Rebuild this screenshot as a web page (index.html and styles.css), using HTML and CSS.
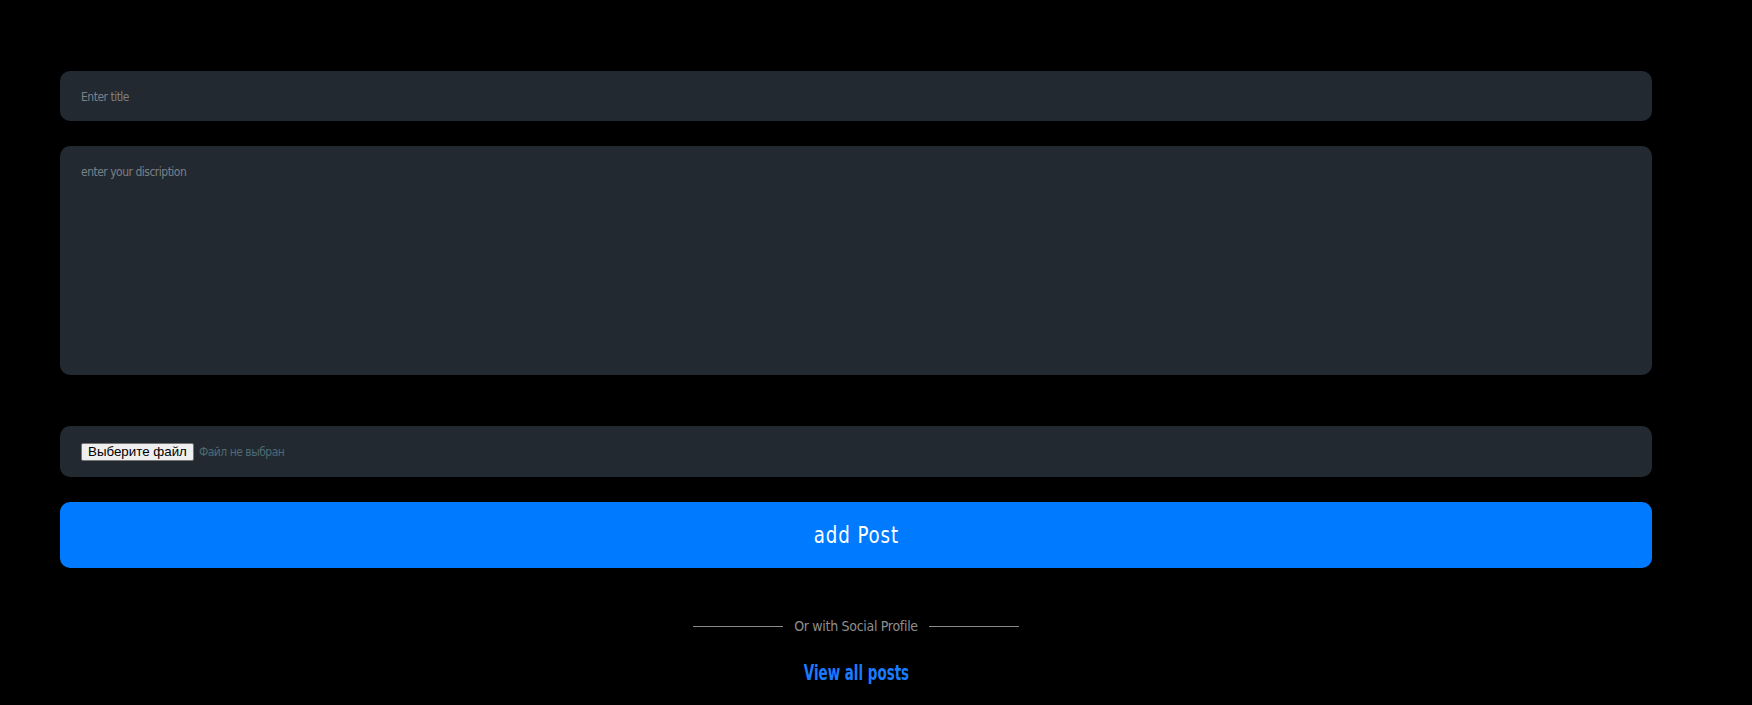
FILE: index.html
```html
<!DOCTYPE html>
<html lang="en">
<head>
<meta charset="utf-8">
<title>Add Post</title>
<link rel="stylesheet" href="styles.css">
</head>
<body>
<main class="page">
  <form class="post-form">
    <input class="field field-title" type="text" placeholder="Enter title">
    <textarea class="field field-desc" placeholder="enter your discription"></textarea>
    <div class="field field-file">
      <span class="file-btn">Выберите файл</span>
      <span class="file-name">Файл не выбран</span>
    </div>
    <button class="submit" type="button"><span class="submit-label">add Post</span></button>
  </form>
  <div class="divider">
    <span class="divider-line"></span>
    <span class="divider-text">Or with Social Profile</span>
    <span class="divider-line"></span>
  </div>
  <a class="view-all" href="#">View all posts</a>
</main>
</body>
</html>
```

FILE: styles.css
```css
* { box-sizing: border-box; }
html, body { margin: 0; padding: 0; background: #000; }
body {
  font-family: "DejaVu Sans Condensed", "Liberation Sans", sans-serif;
  width: 1752px;
  height: 705px;
  overflow: hidden;
}
.page {
  padding: 71px 100px 0 60px;
  display: flex;
  flex-direction: column;
  align-items: center;
}
.post-form {
  width: 100%;
  display: flex;
  flex-direction: column;
}
.field {
  width: 100%;
  background: #222930;
  border: none;
  border-radius: 10px;
  outline: none;
  color: #aab;
  font-family: inherit;
  font-size: 12px;
  letter-spacing: -0.5px;
  padding: 0 21px;
}
.field::placeholder { color: #7b8087; }
.field-title { height: 50px; padding-top: 1px; }
.field-desc {
  margin-top: 25px;
  height: 229px;
  padding-top: 19px;
  resize: none;
}
.field-file {
  margin-top: 51px;
  height: 51px;
  display: flex;
  align-items: center;
  gap: 5px;
}
.file-btn {
  font-family: "Liberation Sans", Arial, sans-serif;
  font-size: 13.33px;
  letter-spacing: 0;
  color: #000;
  background: #efefef;
  border: 1px solid #767676;
  border-radius: 2px;
  padding: 0 6px;
  height: 18px;
  line-height: 16px;
  display: inline-flex;
  align-items: center;
}
.file-name {
  color: #4e6973;
  font-size: 12px;
  letter-spacing: -0.5px;
}
.submit {
  margin-top: 25px;
  height: 66px;
  width: 100%;
  border: none;
  border-radius: 10px;
  background: #007bff;
  color: #fff;
  font-family: inherit;
  font-size: 23px;
  letter-spacing: 1px;
  padding: 0;
}
.submit-label {
  display: inline-block;
  transform: scaleX(0.88);
}
.divider {
  margin-top: 50px;
  display: flex;
  align-items: center;
  gap: 11px;
}
.divider-line {
  width: 90px;
  height: 1px;
  background: #8a8a8a;
}
.divider-text {
  color: #8e8e8e;
  font-size: 14px;
  letter-spacing: -0.3px;
}
.view-all {
  margin-top: 26px;
  color: #1a7bff;
  font-weight: bold;
  font-size: 22px;
  text-decoration: none;
  display: inline-block;
  transform: scaleX(0.68);
}
```
